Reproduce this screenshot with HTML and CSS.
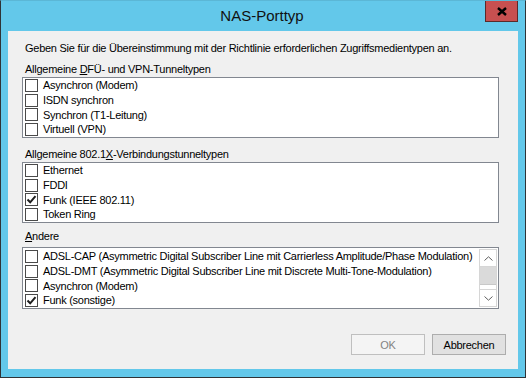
FILE: index.html
```html
<!DOCTYPE html>
<html>
<head>
<meta charset="utf-8">
<link rel="stylesheet" href="styles.css">
</head>
<body>
<div class="window">
  <div class="titlebar">
    <span class="title">NAS-Porttyp</span>
    <div class="close"><svg width="10" height="9" viewBox="0 0 10 9"><path d="M1 1 L9 8 M9 1 L1 8" stroke="#000" stroke-width="2.4" fill="none"/></svg></div>
  </div>
  <div class="client">
    <p class="intro">Geben Sie für die Übereinstimmung mit der Richtlinie erforderlichen Zugriffsmedientypen an.</p>

    <div class="label l1">Allgemeine <u>D</u>FÜ- und VPN-Tunneltypen</div>
    <div class="list">
      <div class="row"><span class="cb"></span>Asynchron (Modem)</div>
      <div class="row"><span class="cb"></span>ISDN synchron</div>
      <div class="row"><span class="cb"></span>Synchron (T1-Leitung)</div>
      <div class="row"><span class="cb"></span>Virtuell (VPN)</div>
    </div>

    <div class="label l2">Allgemeine 802.1<u>X</u>-Verbindungstunneltypen</div>
    <div class="list">
      <div class="row"><span class="cb"></span>Ethernet</div>
      <div class="row"><span class="cb"></span>FDDI</div>
      <div class="row"><span class="cb checked"><svg width="11" height="11" viewBox="0 0 11 11"><path d="M1.5 5.5 L4.2 8.3 L9.5 2.2" stroke="#1e1e1e" stroke-width="2" fill="none"/></svg></span>Funk (IEEE 802.11)</div>
      <div class="row"><span class="cb"></span>Token Ring</div>
    </div>

    <div class="label l3"><u>A</u>ndere</div>
    <div class="list list3">
      <div class="items">
        <div class="row"><span class="cb"></span>ADSL-CAP (Asymmetric Digital Subscriber Line mit Carrierless Amplitude/Phase Modulation)</div>
        <div class="row"><span class="cb"></span>ADSL-DMT (Asymmetric Digital Subscriber Line mit Discrete Multi-Tone-Modulation)</div>
        <div class="row"><span class="cb"></span>Asynchron (Modem)</div>
        <div class="row"><span class="cb checked"><svg width="11" height="11" viewBox="0 0 11 11"><path d="M1.5 5.5 L4.2 8.3 L9.5 2.2" stroke="#1e1e1e" stroke-width="2" fill="none"/></svg></span>Funk (sonstige)</div>
      </div>
      <div class="scrollbar">
        <div class="sbtn up"><svg width="9" height="5" viewBox="0 0 9 5"><path d="M0.5 4.5 L4.5 0.8 L8.5 4.5" stroke="#606060" stroke-width="1" fill="none"/></svg></div>
        <div class="thumb"></div>
        <div class="track"></div>
        <div class="sbtn"><svg width="9" height="5" viewBox="0 0 9 5"><path d="M0.5 0.5 L4.5 4.2 L8.5 0.5" stroke="#606060" stroke-width="1" fill="none"/></svg></div>
      </div>
    </div>

    <div class="buttons">
      <div class="btn disabled">OK</div>
      <div class="btn">Abbrechen</div>
    </div>
  </div>
</div>
</body>
</html>
```

FILE: styles.css
```css
html, body {
  margin: 0;
  padding: 0;
}
body {
  font-family: "Liberation Sans", Arial, sans-serif;
  font-size: 11px;
  letter-spacing: -0.26px;
  color: #000;
}
.window {
  width: 526px;
  height: 378px;
  box-sizing: border-box;
  background: #63c8ea;
  border: 1px solid #2f3336;
  border-top-color: #5bb7d6;
  display: flex;
  flex-direction: column;
  position: relative;
}
.titlebar {
  height: 30px;
  display: flex;
  align-items: center;
  justify-content: center;
}
.title {
  font-size: 15px;
  letter-spacing: 0;
  color: #111;
  margin-top: -1px;
  margin-left: -2px;
}
.close {
  position: absolute;
  top: 0;
  right: 7px;
  width: 33px;
  height: 21px;
  box-sizing: border-box;
  background: #c75050;
  border: 1px solid #5a2a2a;
  border-top: none;
  display: flex;
  align-items: center;
  justify-content: center;
}
.client {
  margin: 0 7px;
  height: 338px;
  background: #f0f0f0;
  box-sizing: border-box;
  padding: 11px 19px 0 14px;
  display: flex;
  flex-direction: column;
}
.intro {
  margin: 0 0 0 3px;
  line-height: 13px;
}
.label {
  line-height: 13px;
  margin-left: 3px;
}
.l1 { margin-top: 8px; margin-bottom: 1px; }
.l2 { margin-top: 10px; margin-bottom: 1px; }
.l3 { margin-top: 7px; margin-bottom: 4px; }
u { text-decoration: underline; text-underline-offset: 1px; }
.list {
  height: 61px;
  flex: none;
  box-sizing: border-box;
  border: 1px solid #828790;
  background: #fff;
  padding: 0 0 0 2px;
  overflow: hidden;
}
.list3 {
  height: 62px;
  display: flex;
  padding: 1px 1px 1px 2px;
}
.items {
  flex: 1;
  min-width: 0;
  overflow: hidden;
}
.row {
  height: 14.7px;
  display: flex;
  align-items: center;
  white-space: nowrap;
}
.cb {
  width: 13px;
  height: 13px;
  box-sizing: border-box;
  border: 1px solid #4a4a4a;
  background: #fff;
  margin-right: 5px;
  display: flex;
  align-items: center;
  justify-content: center;
  flex: none;
}
.scrollbar {
  width: 18px;
  flex: none;
  display: flex;
  flex-direction: column;
  border: 1px solid #d6d6d6;
  box-sizing: border-box;
  background: #fff;
}
.sbtn {
  height: 16px;
  flex: none;
  display: flex;
  align-items: center;
  justify-content: center;
  background: #fff;
}
.sbtn.up { border-bottom: 1px solid #d6d6d6; }
.thumb {
  height: 17px;
  flex: none;
  background: #dadada;
  border-bottom: 1px solid #c8c8c8;
}
.track {
  flex: 1;
  background: #fff;
  border-bottom: 1px solid #d6d6d6;
}
.buttons {
  margin-top: auto;
  margin-bottom: 14px;
  display: flex;
  justify-content: flex-end;
  gap: 7px;
  margin-right: -7px;
}
.btn {
  width: 74px;
  height: 21px;
  box-sizing: border-box;
  border: 1px solid #adadad;
  background: #e1e1e1;
  display: flex;
  align-items: center;
  justify-content: center;
}
.btn.disabled {
  background: #f4f4f4;
  border-color: #bfbfbf;
  color: #838383;
}
```
